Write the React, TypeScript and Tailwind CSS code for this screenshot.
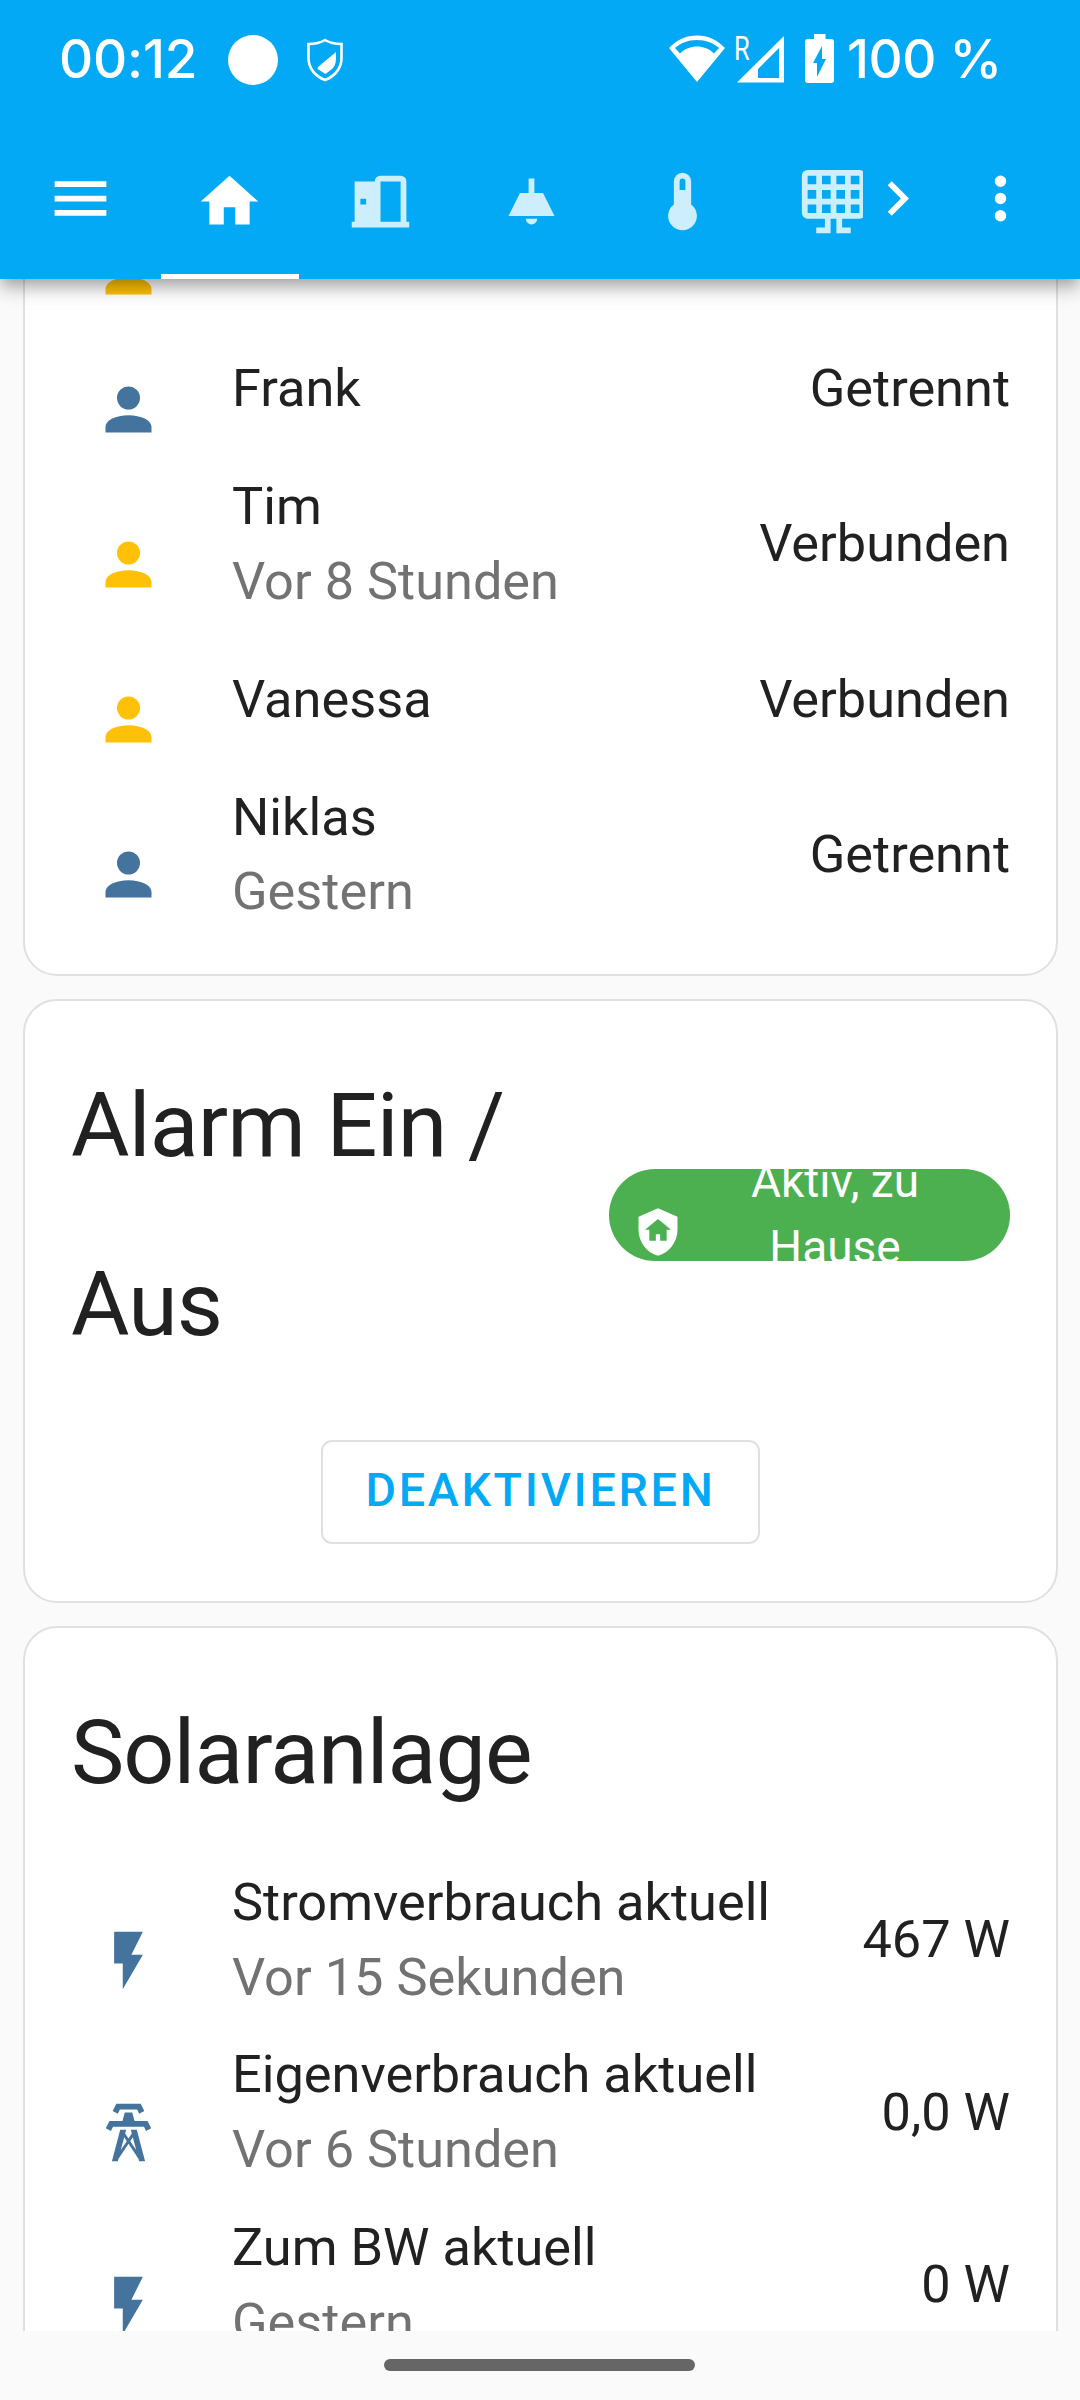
import type { ReactNode } from "react";

const icons = {
  menu: "M3,6H21V8H3V6M3,11H21V13H3V11M3,16H21V18H3V16Z",
  home: "M10,20V14H14V20H19V12H22L12,3L2,12H5V20H10Z",
  door: "M21,19V5A2,2 0 0,0 19,3H12A2,2 0 0,0 10,5H3V19H2V21H22V19H21M12,19V5H19V19H12M5,11H7V13H5V11Z",
  lamp: "M8,9H11V4H13V9H16L20,17H4L8,9M14,18A2,2 0 0,1 12,20A2,2 0 0,1 10,18H14Z",
  thermometer:
    "M15,13V5A3,3 0 0,0 9,5V13A5,5 0 1,0 15,13M12,4A1,1 0 0,1 13,5V8H11V5A1,1 0 0,1 12,4Z",
  solar:
    "M3,1H21A2,2 0 0,1 23,3V16A2,2 0 0,1 21,18H15V21H18V23H13V18H11V23H6V21H9V18H3A2,2 0 0,1 1,16V3A2,2 0 0,1 3,1M3,3V6H6V3H3M8,3V6H11V3H8M13,3V6H16V3H13M18,3V6H21V3H18M3,8V11H6V8H3M8,8V11H11V8H8M13,8V11H16V8H13M18,8V11H21V8H18M3,13V16H6V13H3M8,13V16H11V13H8M13,13V16H16V13H13M18,13V16H21V13H18Z",
  chevron: "M8.59,16.58L13.17,12L8.59,7.41L10,6L16,12L10,18L8.59,16.58Z",
  dots: "M12,16A2,2 0 0,1 14,18A2,2 0 0,1 12,20A2,2 0 0,1 10,18A2,2 0 0,1 12,16M12,10A2,2 0 0,1 14,12A2,2 0 0,1 12,14A2,2 0 0,1 10,12A2,2 0 0,1 12,10M12,4A2,2 0 0,1 14,6A2,2 0 0,1 12,8A2,2 0 0,1 10,6A2,2 0 0,1 12,4Z",
  account:
    "M12,4A4,4 0 0,1 16,8A4,4 0 0,1 12,12A4,4 0 0,1 8,8A4,4 0 0,1 12,4M12,14C16.42,14 20,15.79 20,18V20H4V18C4,15.79 7.58,14 12,14Z",
  flash: "M7,2V13H10V22L17,10H13L17,2H7Z",
  tower:
    "M8.28,5.45L6.5,4.55L7.76,2H16.23L17.5,4.55L15.72,5.44L15,4H9L8.28,5.45M18.62,8H14.09L13.3,5H10.7L9.91,8H5.38L4.1,10.55L5.89,11.44L6.62,10H17.38L18.1,11.45L19.89,10.56L18.62,8M17.77,22H15.7L15.46,21.1L12,15.9L8.53,21.1L8.3,22H6.23L9.12,11H11.19L10.83,12.35L12,14.1L13.16,12.35L12.81,11H14.88L17.77,22M11.4,15L10.5,13.65L9.32,18.13L11.4,15M14.68,18.12L13.5,13.64L12.6,15L14.68,18.12Z",
  shieldHome:
    "M11,13H13V16H16V11H18L12,6L6,11H8V16H11V13M12,1L21,5V11C21,16.55 17.16,21.74 12,23C6.84,21.74 3,16.55 3,11V5L12,1Z",
};

type IconName = keyof typeof icons;

function Icon({ name, className = "size-[69px]" }: { name: IconName; className?: string }) {
  return (
    <svg viewBox="0 0 24 24" fill="currentColor" fillRule="evenodd" className={`shrink-0 ${className}`}>
      <path d={icons[name]} />
    </svg>
  );
}

type Entity = {
  icon: IconName;
  name?: string;
  changed?: string;
  state?: string;
  active?: boolean;
};

const people: Entity[] = [
  { icon: "account", active: true },
  { icon: "account", name: "Frank", state: "Getrennt" },
  { icon: "account", name: "Tim", changed: "Vor 8 Stunden", state: "Verbunden", active: true },
  { icon: "account", name: "Vanessa", state: "Verbunden", active: true },
  { icon: "account", name: "Niklas", changed: "Gestern", state: "Getrennt" },
];

const solar: Entity[] = [
  { icon: "flash", name: "Stromverbrauch aktuell", changed: "Vor 15 Sekunden", state: "467 W" },
  { icon: "tower", name: "Eigenverbrauch aktuell", changed: "Vor 6 Stunden", state: "0,0 W" },
  { icon: "flash", name: "Zum BW aktuell", changed: "Gestern", state: "0 W" },
];

const tabs: IconName[] = ["home", "door", "lamp", "thermometer", "solar"];

function StatusBar() {
  return (
    <div className="flex h-[120px] items-start pl-[59px] pt-[27px] font-['Inter',sans-serif] text-[53px] font-medium leading-[64px]">
      <span className="w-[169px] whitespace-nowrap tracking-[-0.2px]">00:12</span>
      <span className="mt-2 size-[50px] rounded-full bg-white" />
      <svg viewBox="0 0 38 44" className="ml-[28px] mt-[11px] h-[44px] w-[38px]">
        <path
          d="M19 2C14 5 8 6 2.5 6V20C2.5 31 10 38.5 19 42C28 38.5 35.5 31 35.5 20V6C30 6 24 5 19 2Z"
          fill="none"
          stroke="white"
          strokeWidth="2.6"
        />
        <path d="M30 14C30 24 30 27 26 31L19.5 36L11.5 31L12 29Z" fill="white" />
      </svg>
      <svg viewBox="0 0 56 47" className="ml-[325px] mt-[8px] h-[47px] w-[56px]" fill="white">
        <path
          fillRule="evenodd"
          d="M28 0.5C17 0.5 7.5 5 0 13L28 47L56 13C48.5 5 39 0.5 28 0.5ZM28 5C37 5 44.5 8 50 13L45 18.5C40 13.5 34 11.5 28 11.5C22 11.5 16 13.5 11 18.5L6 13C11.5 8 19 5 28 5Z"
        />
      </svg>
      <div className="relative ml-[10px] mt-[8px] h-[48px] w-[50px]">
        <span className="absolute left-[-1px] top-[-4px] origin-left scale-x-75 font-['Roboto',sans-serif] text-[34px] font-normal leading-[34px]">
          R
        </span>
        <svg viewBox="0 0 50 48" className="size-full" fill="white" fillRule="evenodd">
          <path d="M49 1V47.5H2ZM44 13L23 34V43H44Z" />
        </svg>
      </div>
      <svg viewBox="0 0 29 49" className="ml-[20px] mt-[7px] h-[49px] w-[29px]" fill="white">
        <path
          fillRule="evenodd"
          d="M9 0H20.5V5H26A3 3 0 0 1 29 8V46A3 3 0 0 1 26 49H3A3 3 0 0 1 0 46V8A3 3 0 0 1 3 5H9ZM17 12L8 29H12V43L21 25H17Z"
        />
      </svg>
      <span className="ml-[13px] whitespace-nowrap tracking-[-0.5px]">100 %</span>
    </div>
  );
}

function Toolbar() {
  return (
    <div className="flex h-[159px] pl-[46px]">
      <Icon name="menu" className="mt-[44px] size-[69px]" />
      <div className="ml-[45.5px] flex w-[702.5px] gap-[13px] overflow-hidden">
        {tabs.map((tab, i) => (
          <div
            key={tab}
            className={
              i === 0
                ? "flex w-[138px] shrink-0 justify-center border-b-[5px] border-white pt-[47px]"
                : "flex w-[138px] shrink-0 justify-center pt-[47px] text-white/80"
            }
          >
            <Icon name={tab} />
          </div>
        ))}
      </div>
      <Icon name="chevron" className="mt-[44px] size-[69px]" />
      <Icon name="dots" className="ml-[34px] mt-[44px] size-[69px]" />
    </div>
  );
}

function Card({ children, className = "" }: { children: ReactNode; className?: string }) {
  return (
    <section
      className={`shrink-0 rounded-[34px] border-2 border-[#e0e0e0] bg-white px-[46px] ${className}`}
    >
      {children}
    </section>
  );
}

function EntityRow({ icon, name, changed, state, active }: Entity) {
  return (
    <div className="flex min-h-[115px] items-center text-[52.3px] leading-[74.75px]">
      <div className={`flex w-[115px] justify-center pt-[41px] ${active ? "text-[#ffc107]" : "text-[#44739e]"}`}>
        <Icon name={icon} />
      </div>
      <div className="ml-[46px] flex-1 whitespace-nowrap">
        <div>{name}</div>
        {changed ? <div className="text-[#727272]">{changed}</div> : null}
      </div>
      <div className="whitespace-nowrap">{state}</div>
    </div>
  );
}

export default function App() {
  return (
    <div className="flex h-[2400px] w-[1080px] flex-col overflow-hidden bg-[#fafafa] font-['Roboto',sans-serif] text-[#212121]">
      <header className="z-10 h-[279px] shrink-0 bg-[#03a9f4] text-white shadow-[0_6px_12px_-3px_rgba(0,0,0,0.2),0_12px_14px_0_rgba(0,0,0,0.14),0_3px_29px_0_rgba(0,0,0,0.12)]">
        <StatusBar />
        <Toolbar />
      </header>

      <main className="flex h-[2052px] shrink-0 flex-col gap-[23px] overflow-hidden pl-[23px] pr-[22px]">
        <Card className="-mt-[88px] pb-[45px]">
          <div className="flex flex-col gap-[23px]">
            {people.map((row, i) => (
              <EntityRow key={i} {...row} />
            ))}
          </div>
        </Card>

        <Card className="h-[604px] pt-[35px]">
          <div className="flex items-center justify-between">
            <h1 className="w-[450px] text-[89.7px] leading-[179.4px] tracking-[-0.8px]">Alarm Ein / Aus</h1>
            <div className="flex h-[92px] w-[401px] items-center overflow-hidden rounded-full bg-[#4caf50] pl-[23px] text-white">
              <Icon name="shieldHome" className="mt-[33px] size-[52px]" />
              <span className="-mt-[3px] ml-[56px] w-[190px] text-center text-[46px] leading-[66px]">
                Aktiv, zu Hause
              </span>
            </div>
          </div>
          <div className="mt-[45px] flex justify-center">
            <button className="h-[104px] w-[439px] rounded-[11px] border-2 border-[#e0e0e0] pb-[4px] text-[46.7px] font-medium tracking-[2.7px] text-[#03a9f4]">
              DEAKTIVIEREN
            </button>
          </div>
        </Card>

        <Card className="pb-[46px] pt-[34.5px]">
          <h1 className="text-[89.7px] leading-[179.4px] tracking-[-0.9px]">Solaranlage</h1>
          <div className="mt-[23px] flex flex-col gap-[23px]">
            {solar.map((row) => (
              <EntityRow key={row.name} {...row} />
            ))}
          </div>
        </Card>
      </main>

      <footer className="flex flex-1 justify-center pr-[2px] pt-[28px]">
        <div className="h-[12px] w-[311px] rounded-full bg-[#666666]" />
      </footer>
    </div>
  );
}
